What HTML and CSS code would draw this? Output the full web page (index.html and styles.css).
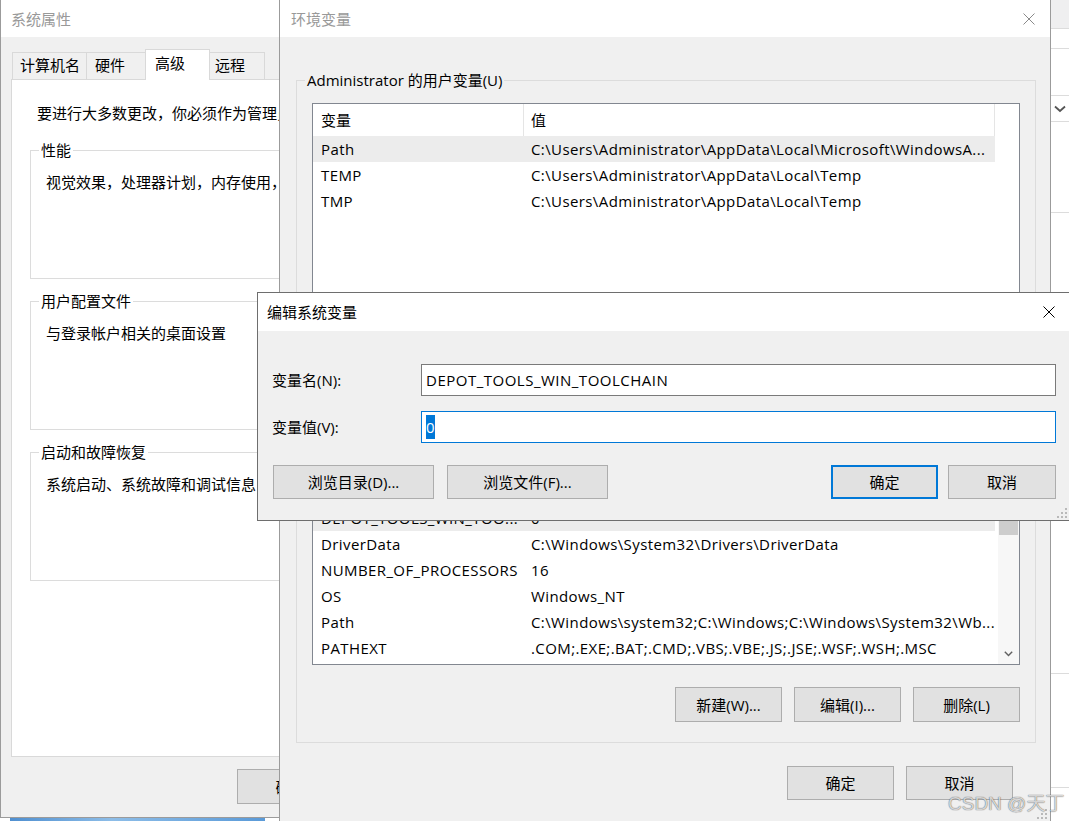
FILE: index.html
```html
<!DOCTYPE html>
<html lang="zh-CN">
<head>
<meta charset="utf-8">
<title>编辑系统变量</title>
<link rel="stylesheet" href="styles.css">
</head>
<body>

<!-- window lying behind, on the right -->
<div class="backdrop">
  <div class="bd-row bd-band"></div>
  <div class="bd-row bd-r1"></div>
  <div class="bd-row bd-r2"></div>
  <div class="bd-row bd-r3">
    <svg width="12" height="8" viewBox="0 0 12 8"><path d="M1 1.5L6 6L11 1.5" fill="none" stroke="#555" stroke-width="1.8"/></svg>
  </div>
  <div class="bd-row bd-r4"></div>
  <div class="bd-row bd-r5"></div>
  <div class="bd-row bd-r6"></div>
</div>
<div class="wallpaper"></div>

<!-- 系统属性 -->
<div class="window sysprop">
  <div class="titlebar inactive"><span class="title">系统属性</span></div>
  <div class="client sys-client">
    <div class="tabs">
      <span class="tab tab-name">计算机名</span>
      <span class="tab tab-hw">硬件</span>
      <span class="tab tab-adv active">高级</span>
      <span class="tab tab-remote">远程</span>
    </div>
    <div class="tab-panel">
      <p class="note">要进行大多数更改，你必须作为管理员登录。</p>
      <fieldset class="group sys-group">
        <legend>性能</legend>
        <p>视觉效果，处理器计划，内存使用，以及虚拟内存</p>
      </fieldset>
      <fieldset class="group sys-group">
        <legend>用户配置文件</legend>
        <p>与登录帐户相关的桌面设置</p>
      </fieldset>
      <fieldset class="group sys-group">
        <legend>启动和故障恢复</legend>
        <p>系统启动、系统故障和调试信息</p>
      </fieldset>
    </div>
    <div class="button-row sys-buttons">
      <button class="btn">确定</button>
      <button class="btn">取消</button>
      <button class="btn">应用(A)</button>
    </div>
  </div>
</div>

<!-- 环境变量 -->
<div class="window envvars">
  <div class="titlebar inactive">
    <span class="title">环境变量</span>
    <span class="close"><svg width="12" height="12" viewBox="0 0 12 12"><path d="M0.5 0.5L11.5 11.5M11.5 0.5L0.5 11.5"/></svg></span>
  </div>
  <div class="client env-client">
    <fieldset class="group env-group user-group">
      <legend>Administrator 的用户变量(U)</legend>
      <div class="list user-list">
        <div class="list-main">
          <div class="list-head"><span class="cell name">变量</span><span class="cell value">值</span></div>
          <div class="list-row selected"><span class="cell name">Path</span><span class="cell value">C:\Users\Administrator\AppData\Local\Microsoft\WindowsA...</span></div>
          <div class="list-row"><span class="cell name">TEMP</span><span class="cell value">C:\Users\Administrator\AppData\Local\Temp</span></div>
          <div class="list-row"><span class="cell name">TMP</span><span class="cell value">C:\Users\Administrator\AppData\Local\Temp</span></div>
        </div>
      </div>
      <div class="group-buttons">
        <button class="btn">新建(N)...</button>
        <button class="btn">编辑(E)...</button>
        <button class="btn">删除(D)</button>
      </div>
    </fieldset>

    <fieldset class="group env-group">
      <legend>系统变量(S)</legend>
      <div class="list sys-list">
        <div class="list-main">
          <div class="list-head"><span class="cell name">变量</span><span class="cell value">值</span></div>
          <div class="list-row selected"><span class="cell name">DEPOT_TOOLS_WIN_TOO...</span><span class="cell value">0</span></div>
          <div class="list-row"><span class="cell name">DriverData</span><span class="cell value">C:\Windows\System32\Drivers\DriverData</span></div>
          <div class="list-row"><span class="cell name">NUMBER_OF_PROCESSORS</span><span class="cell value">16</span></div>
          <div class="list-row"><span class="cell name">OS</span><span class="cell value">Windows_NT</span></div>
          <div class="list-row"><span class="cell name">Path</span><span class="cell value">C:\Windows\system32;C:\Windows;C:\Windows\System32\Wb...</span></div>
          <div class="list-row"><span class="cell name">PATHEXT</span><span class="cell value">.COM;.EXE;.BAT;.CMD;.VBS;.VBE;.JS;.JSE;.WSF;.WSH;.MSC</span></div>
        </div>
        <div class="scrollbar">
          <div class="sb-arrow"></div>
          <div class="sb-thumb"></div>
          <div class="sb-track"></div>
          <div class="sb-arrow">
            <svg width="9" height="6" viewBox="0 0 9 6"><path d="M0.8 0.8L4.5 4.6L8.2 0.8" fill="none" stroke="#606060" stroke-width="1.4"/></svg>
          </div>
        </div>
      </div>
      <div class="group-buttons">
        <button class="btn">新建(W)...</button>
        <button class="btn">编辑(I)...</button>
        <button class="btn">删除(L)</button>
      </div>
    </fieldset>

    <div class="button-row env-buttons">
      <button class="btn">确定</button>
      <button class="btn">取消</button>
    </div>
  </div>
  <svg class="grip" width="10" height="10" viewBox="0 0 10 10">
    <rect x="8" y="0" width="2" height="2"/><rect x="4" y="4" width="2" height="2"/><rect x="8" y="4" width="2" height="2"/>
    <rect x="0" y="8" width="2" height="2"/><rect x="4" y="8" width="2" height="2"/><rect x="8" y="8" width="2" height="2"/>
  </svg>
</div>

<!-- 编辑系统变量 -->
<div class="window editdlg">
  <div class="titlebar">
    <span class="title">编辑系统变量</span>
    <span class="close"><svg width="12" height="12" viewBox="0 0 12 12"><path d="M0.5 0.5L11.5 11.5M11.5 0.5L0.5 11.5"/></svg></span>
  </div>
  <div class="client dlg-client">
    <div class="field">
      <span class="field-label">变量名(N):</span>
      <div class="textbox">DEPOT_TOOLS_WIN_TOOLCHAIN</div>
    </div>
    <div class="field">
      <span class="field-label">变量值(V):</span>
      <div class="textbox focused"><span class="sel">0</span></div>
    </div>
    <div class="dlg-buttons">
      <button class="btn wide">浏览目录(D)...</button>
      <button class="btn wide">浏览文件(F)...</button>
      <span class="spacer"></span>
      <button class="btn default">确定</button>
      <button class="btn">取消</button>
    </div>
  </div>
  <svg class="grip" width="10" height="10" viewBox="0 0 10 10">
    <rect x="8" y="0" width="2" height="2"/><rect x="4" y="4" width="2" height="2"/><rect x="8" y="4" width="2" height="2"/>
    <rect x="0" y="8" width="2" height="2"/><rect x="4" y="8" width="2" height="2"/><rect x="8" y="8" width="2" height="2"/>
  </svg>
</div>

<div class="watermark">CSDN @天丁</div>

</body>
</html>
```

FILE: styles.css
```css
html, body {
  margin: 0;
  padding: 0;
}
body {
  position: relative;
  width: 1069px;
  height: 821px;
  overflow: hidden;
  background: #fff;
  font-family: "Open Sans", "Noto Sans CJK SC", sans-serif;
  font-size: 15px;
  line-height: 20px;
  color: #000;
}
p {
  margin: 0;
}
button {
  font: inherit;
  color: inherit;
}

/* the app behind, right edge */
.backdrop {
  position: absolute;
  left: 1051px;
  top: 0;
  width: 18px;
  height: 821px;
  display: flex;
  flex-direction: column;
}
.bd-row {
  flex: none;
  border-bottom: 1px solid #dcdcdc;
}
.bd-band { height: 28px; background: #efeff0; }
.bd-r1 { height: 19px; }
.bd-r2 { height: 46px; }
.bd-r3 {
  height: 25px;
  display: flex;
  align-items: center;
  padding-left: 3px;
}
.bd-r4 { height: 90px; }
.bd-r5 { height: 460px; }
.bd-r6 { height: 113px; }

.wallpaper {
  position: absolute;
  left: 10px;
  top: 818px;
  width: 255px;
  height: 3px;
  background: linear-gradient(90deg, #4f8fd0, #8dbde8 40%, #5a9ad8);
}

/* windows */
.window {
  position: absolute;
  box-sizing: border-box;
  display: flex;
  flex-direction: column;
  background: #f0f0f0;
  border: 1px solid #9b9b9b;
}
.titlebar {
  flex: none;
  display: flex;
  align-items: center;
  height: 37px;
  padding-left: 10px;
  background: #fff;
}
.titlebar.inactive .title {
  color: #999;
}
.envvars .titlebar {
  padding-left: 11px;
}
.close {
  margin-left: auto;
  width: 42px;
  height: 100%;
  display: flex;
  align-items: center;
  justify-content: center;
}
.close path {
  stroke: #000;
  stroke-width: 1;
  fill: none;
}
.titlebar.inactive .close path {
  stroke: #8a8a8a;
}
.client {
  flex: 1;
  display: flex;
  flex-direction: column;
}
.grip {
  position: absolute;
  right: 3px;
  bottom: 2px;
  fill: #b9b9b9;
}

.btn {
  box-sizing: border-box;
  flex: none;
  width: 107px;
  height: 35px;
  padding: 0;
  border: 1px solid #adadad;
  background: #e1e1e1;
  line-height: 20px;
  white-space: nowrap;
}
.btn.default {
  border: 2px solid #0078d7;
}
.button-row {
  display: flex;
  justify-content: flex-end;
  gap: 12px;
}

/* group boxes */
.group {
  margin: 0;
  min-width: 0;
  border: 1px solid #dcdcdc;
  padding: 12px 15px;
}
.group legend {
  padding: 0 2px;
  margin-left: -7px;
  line-height: 20px;
}

/* 系统属性 */
.sysprop {
  left: 0;
  top: -1px;
  width: 593px;
  height: 819px;
}
.sys-client {
  padding: 12px 10px 0 10px;
}
.tabs {
  display: flex;
  align-items: flex-end;
  height: 30px;
  margin-left: 1px;
}
.tab {
  box-sizing: border-box;
  height: 27px;
  margin-right: -1px;
  border: 1px solid #d9d9d9;
  border-bottom: 0;
  background: #f0f0f0;
  line-height: 24px;
  white-space: nowrap;
}
.tab.active {
  position: relative;
  z-index: 1;
  height: 31px;
  margin-bottom: -1px;
  background: #fff;
  line-height: 26px;
}
.tab-name { width: 75px; padding-left: 7px; }
.tab-hw { width: 60px; padding-left: 8px; }
.tab-adv { width: 65px; padding-left: 9px; }
.tab-remote { width: 56px; padding-left: 5px; }

.tab-panel {
  box-sizing: border-box;
  height: 678px;
  background: #fff;
  border: 1px solid #d9d9d9;
  padding: 23px 17px 0 18px;
}
.note {
  margin: 0 0 17px 7px;
  white-space: nowrap;
}
.sys-group {
  box-sizing: border-box;
  height: 139px;
  margin-bottom: 12px;
}
.sys-group p {
  white-space: nowrap;
}
.sys-buttons {
  margin-top: 12px;
}

/* 环境变量 */
.envvars {
  left: 279px;
  top: -1px;
  width: 772px;
  height: 823px;
}
.env-client {
  padding: 33px 14px 0 16px;
}
.env-group {
  padding-top: 13px;
  padding-bottom: 20px;
}
.user-group {
  margin-bottom: 12px;
}
.list {
  box-sizing: border-box;
  display: flex;
  overflow: hidden;
  background: #fff;
  border: 1px solid #828790;
}
.user-list { height: 246px; }
.sys-list { height: 193px; }
.list-main {
  flex: none;
  width: 682px;
}
.list-head,
.list-row {
  display: flex;
  white-space: nowrap;
}
.list-head {
  height: 32px;
}
.list-row {
  height: 26px;
  align-items: center;
}
.list-row.selected {
  background: #ececec;
}
.cell {
  box-sizing: border-box;
  overflow: hidden;
}
.list-row .cell {
  letter-spacing: 0.4px;
}
.cell.name {
  width: 211px;
  padding-left: 8px;
}
.cell.value {
  flex: 1;
  padding-left: 7px;
}
.list-head .cell {
  display: flex;
  align-items: center;
  border-right: 1px solid #e5e5e5;
}
.scrollbar {
  margin-left: auto;
  width: 21px;
  display: flex;
  flex-direction: column;
  background: #f7f7f7;
}
.sb-arrow {
  flex: none;
  height: 21px;
  display: flex;
  align-items: center;
  justify-content: center;
}
.sb-thumb {
  flex: none;
  height: 41px;
  margin: 0 1px;
  background: #cdcdcd;
}
.sb-track {
  flex: 1;
}
.group-buttons {
  display: flex;
  justify-content: flex-end;
  gap: 12px;
  margin-top: 22px;
}
.env-buttons {
  margin-top: 23px;
  padding-right: 23px;
}
.env-buttons .btn {
  height: 34px;
}

/* 编辑系统变量 */
.editdlg {
  left: 257px;
  top: 292px;
  width: 814px;
  height: 229px;
  border-color: #6e6e6e;
}
.editdlg .titlebar {
  height: 38px;
  padding-left: 9px;
}
.dlg-client {
  padding: 33px 14px 0 14px;
}
.field {
  display: flex;
  align-items: center;
}
.field + .field {
  margin-top: 15px;
}
.field-label {
  flex: none;
  width: 149px;
}
.textbox {
  box-sizing: border-box;
  flex: 1;
  display: flex;
  align-items: center;
  height: 32px;
  padding: 0 4px;
  border: 1px solid #7a7a7a;
  background: #fff;
  white-space: nowrap;
  letter-spacing: 0.5px;
}
.textbox.focused {
  border-color: #0078d7;
}
.sel {
  background: #0078d7;
  color: #fff;
  line-height: 24px;
}
.dlg-buttons {
  display: flex;
  margin-top: 22px;
  padding-left: 1px;
}
.dlg-buttons .btn {
  height: 34px;
}
.btn.wide {
  width: 161px;
  margin-right: 13px;
}
.dlg-buttons .spacer {
  flex: 1;
}
.btn.default + .btn {
  width: 108px;
  margin-left: 10px;
}

.watermark {
  position: absolute;
  left: 948px;
  top: 793px;
  font-family: "Liberation Sans", "Noto Sans CJK SC", sans-serif;
  font-size: 19px;
  line-height: 22px;
  color: rgba(255, 255, 255, 0.75);
  text-shadow: 0 0 1px rgba(0, 0, 0, 0.5), 0 0 1px rgba(0, 0, 0, 0.4);
  white-space: nowrap;
}
```
